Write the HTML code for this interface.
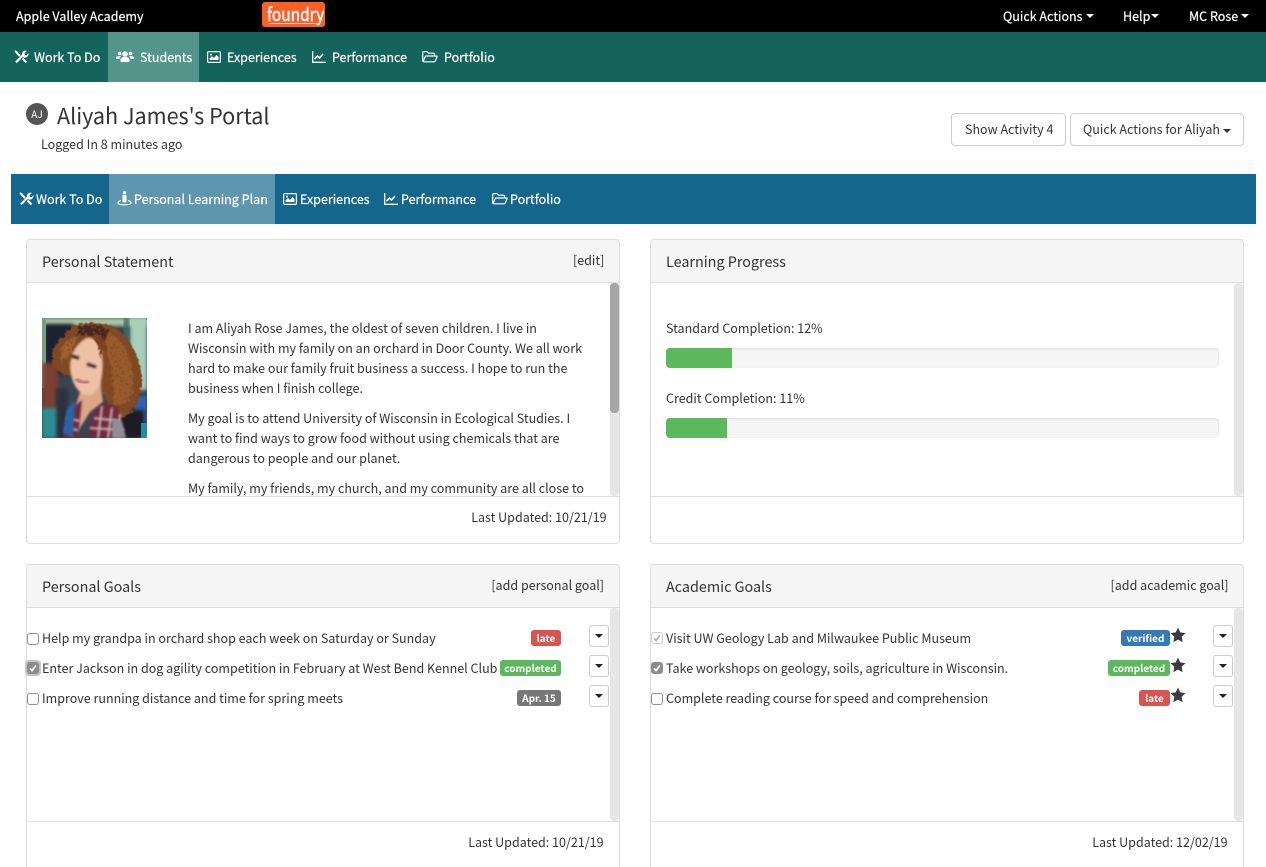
<!DOCTYPE html>
<html><head><meta charset="utf-8"><style>
html,body{margin:0;padding:0;background:#fff}
#p{position:relative;width:1266px;height:867px;overflow:hidden;background:#fff;font-family:"Noto Sans CJK JP","Liberation Sans",sans-serif;font-size:13px;color:#333}
.a,.t{position:absolute}
.t{white-space:nowrap;line-height:20px;transform:scaleX(.963);transform-origin:left center}
.r{transform-origin:right center}
.h{font-size:14.5px;transform:scaleX(.99)}
.w{color:#fff;-webkit-text-stroke:.2px #fff}
.card{position:absolute;border:1px solid #ddd;border-radius:4px;background:#fff;box-sizing:border-box}
.hd{position:absolute;left:0;right:0;top:0;height:42px;background:#f5f5f5;border-bottom:1px solid #ddd;border-radius:3px 3px 0 0}
.sb{position:absolute;width:9px;background:#e6e6e6;border-radius:4px}
.cb{position:absolute;width:10px;height:10px;border:1px solid #8f8f8f;border-radius:3px;background:#fff}
.cb.on{background:#8b8b93;border-color:#8b8b93}
.cb svg{position:absolute;left:0;top:0}
.lb{position:absolute;height:16px;line-height:15px;border-radius:3px;color:#fff;font-size:10px;font-weight:700;text-align:center}
.dd{position:absolute;width:18px;height:20px;border:1px solid #ccc;border-radius:3px;background:#fff}
.dd:after{content:"";position:absolute;left:5px;top:8px;border:4px solid transparent;border-top-color:#222;border-bottom:0}
.car{position:absolute;border:4.5px solid transparent;border-top-color:#fff;border-bottom:0}
.btn{position:absolute;height:33px;border:1px solid #ccc;border-radius:4px;background:#fff;box-sizing:border-box}
.bar{position:absolute;height:20px;background:#f5f5f5;border-radius:4px;box-shadow:inset 0 1px 2px rgba(0,0,0,.1)}
.fill{position:absolute;left:0;top:0;height:20px;background:#5cb85c;border-radius:4px 0 0 4px}
svg{display:block}
</style></head><body><div id="p">

<div class="a" style="left:0;top:0;width:1266px;height:32px;background:#000"></div>
<div class="t w" style="left:16px;top:6px">Apple Valley Academy</div>
<div class="a" style="left:262px;top:2px;width:63px;height:25px;background:#ff5f26;border-radius:3px"></div>
<div class="t w" style="left:267px;top:2px;font-size:18px;line-height:24px;transform:scaleX(.86);-webkit-text-stroke:.5px #fff">foundry</div>
<div class="a" style="left:269px;top:23px;width:50px;height:1px;background:#ffe0d2"></div>
<div class="t w" style="left:1003px;top:6px">Quick Actions</div><div class="car" style="left:1086px;top:14px"></div>
<div class="t w" style="left:1123px;top:6px">Help</div><div class="car" style="left:1151px;top:14px"></div>
<div class="t w" style="left:1189px;top:6px">MC Rose</div><div class="car" style="left:1241px;top:14px"></div>

<div class="a" style="left:0;top:32px;width:1266px;height:50px;background:#14645c"></div>
<div class="a" style="left:108px;top:32px;width:91px;height:50px;background:#53958b"></div>
<svg class="a" style="left:14px;top:50px" width="15" height="14" viewBox="0 0 15 14"><path d="M2 2L6 6M8.500 8.500L12.500 12.500" stroke="#fff" stroke-width="2" fill="none"/><path d="M.3 1.300L1.500.2 4 2 2.500 3.500z" fill="#fff"/><path d="M2 12.300L8.800 5.500" stroke="#fff" stroke-width="2.200" fill="none"/><path d="M8 5.800Q7.300 1.300 11.200.5L12.800 1 10.500 3.200 11 4.700 12.500 5.200 14.600 3Q15 6.800 11 7.700Q10 7.800 9.300 7.300z" fill="#fff"/></svg>
<div class="t w" style="left:34px;top:47px">Work To Do</div>
<svg class="a" style="left:116px;top:50px" width="18" height="13" viewBox="0 0 18 13"><circle cx="9" cy="4" r="2.800" fill="#fff"/><circle cx="3.500" cy="3.500" r="1.800" fill="#fff"/><circle cx="14.500" cy="3.500" r="1.800" fill="#fff"/><path d="M4.500 12V9.500Q5 7 9 7t4.500 2.500V12zM0 9V7.500Q1 6 3.500 6L5 6.500Q3.500 7.500 3.300 9zM18 9V7.500Q17 6 14.500 6L13 6.500q1.500 1 1.700 2.500z" fill="#fff"/></svg>
<div class="t w" style="left:140px;top:47px">Students</div>
<svg class="a" style="left:207px;top:51px" width="14" height="12" viewBox="0 0 14 12"><rect x=".6" y=".6" width="12.800" height="10.800" rx="1" fill="none" stroke="#fff" stroke-width="1.200"/><path d="M2.500 9V7.500L5 5l2 2 2.500-3L11.500 6v3z" fill="#fff"/><circle cx="4" cy="3.600" r="1" fill="#fff"/></svg>
<div class="t w" style="left:227px;top:47px">Experiences</div>
<svg class="a" style="left:312px;top:51px" width="14" height="12" viewBox="0 0 14 12"><path d="M.7 0v11.300H14" fill="none" stroke="#fff" stroke-width="1.300"/><path d="M2.500 8l3-3 2 2 3.500-4" fill="none" stroke="#fff" stroke-width="1.600"/></svg>
<div class="t w" style="left:332px;top:47px">Performance</div>
<svg class="a" style="left:422px;top:51px" width="16" height="12" viewBox="0 0 16 12"><path d="M.7 10.500V1.500Q.7.700 1.500.700h3.500l1.500 1.500h5q1 0 1 1V5M.9 11l2.400-5.500q.2-.5.800-.5h10.400q.9 0 .6.800l-2 4.500q-.2.500-.8.500H1z" fill="none" stroke="#fff" stroke-width="1.200"/></svg>
<div class="t w" style="left:444px;top:47px">Portfolio</div>

<div class="a" style="left:26px;top:103px;width:22px;height:22px;border-radius:50%;background:#555;color:#fff;font-size:10px;line-height:22px;text-align:center">AJ</div>
<div class="t" style="left:57px;top:100px;font-size:22px;line-height:30px;transform:scaleX(.98)">Aliyah James's Portal</div>
<div class="t" style="left:41px;top:134px">Logged In 8 minutes ago</div>
<div class="btn" style="left:951px;top:113px;width:115px"></div>
<div class="t" style="left:965px;top:119px">Show Activity 4</div>
<div class="btn" style="left:1070px;top:113px;width:174px"></div>
<div class="t" style="left:1083px;top:119px">Quick Actions for Aliyah</div>
<div class="a" style="left:1223px;top:129px;border:4px solid transparent;border-top-color:#333;border-bottom:0"></div>

<div class="a" style="left:11px;top:174px;width:1245px;height:50px;background:#14668c"></div>
<div class="a" style="left:109px;top:174px;width:166px;height:50px;background:#5e95af"></div>
<svg class="a" style="left:19px;top:192px" width="15" height="14" viewBox="0 0 15 14"><path d="M2 2L6 6M8.500 8.500L12.500 12.500" stroke="#fff" stroke-width="2" fill="none"/><path d="M.3 1.300L1.500.2 4 2 2.500 3.500z" fill="#fff"/><path d="M2 12.300L8.800 5.500" stroke="#fff" stroke-width="2.200" fill="none"/><path d="M8 5.800Q7.300 1.300 11.200.5L12.800 1 10.500 3.200 11 4.700 12.500 5.200 14.600 3Q15 6.800 11 7.700Q10 7.800 9.300 7.300z" fill="#fff"/></svg>
<div class="t w" style="left:36px;top:189px">Work To Do</div>
<svg class="a" style="left:117px;top:191px" width="15" height="15" viewBox="0 0 15 15"><circle cx="7.500" cy="1.800" r="1.700" fill="#fff"/><rect x="5.500" y="4" width="4" height="7.500" rx="1" fill="#fff"/><path d="M4 9.500Q1 10.300 1 11.700 1 13.800 7.500 13.800T14 11.700Q14 10.300 11 9.500" fill="none" stroke="#fff" stroke-width="1.100"/></svg>
<div class="t w" style="left:134px;top:189px">Personal Learning Plan</div>
<svg class="a" style="left:283px;top:193px" width="14" height="12" viewBox="0 0 14 12"><rect x=".6" y=".6" width="12.800" height="10.800" rx="1" fill="none" stroke="#fff" stroke-width="1.200"/><path d="M2.500 9V7.500L5 5l2 2 2.500-3L11.500 6v3z" fill="#fff"/><circle cx="4" cy="3.600" r="1" fill="#fff"/></svg>
<div class="t w" style="left:300px;top:189px">Experiences</div>
<svg class="a" style="left:384px;top:193px" width="14" height="12" viewBox="0 0 14 12"><path d="M.7 0v11.300H14" fill="none" stroke="#fff" stroke-width="1.300"/><path d="M2.500 8l3-3 2 2 3.500-4" fill="none" stroke="#fff" stroke-width="1.600"/></svg>
<div class="t w" style="left:401px;top:189px">Performance</div>
<svg class="a" style="left:492px;top:193px" width="16" height="12" viewBox="0 0 16 12"><path d="M.7 10.500V1.500Q.7.700 1.500.700h3.500l1.500 1.500h5q1 0 1 1V5M.9 11l2.400-5.500q.2-.5.800-.5h10.400q.9 0 .6.800l-2 4.500q-.2.500-.8.500H1z" fill="none" stroke="#fff" stroke-width="1.200"/></svg>
<div class="t w" style="left:510px;top:189px">Portfolio</div>

<!-- Personal Statement -->
<div class="card" style="left:26px;top:239px;width:594px;height:305px"><div class="hd"></div></div>
<div class="t h" style="left:42px;top:252px">Personal Statement</div>
<div class="t" style="left:573px;top:250px">[edit]</div>
<div class="a" style="left:27px;top:496px;width:592px;height:1px;background:#ddd"></div>
<div class="sb" style="left:610px;top:283px;height:213px"></div>
<div class="sb" style="left:610px;top:283px;height:130px;background:#a6a6a6"></div>
<svg class="a" style="left:42px;top:318px" width="105" height="120" viewBox="0 0 105 120"><defs><filter id="bl" x="-20%" y="-20%" width="140%" height="140%"><feGaussianBlur stdDeviation="1.800"/></filter><filter id="bl2" x="-20%" y="-20%" width="140%" height="140%"><feGaussianBlur stdDeviation="1.100"/></filter><filter id="curl" x="-10%" y="-10%" width="120%" height="120%"><feTurbulence type="fractalNoise" baseFrequency=".3" numOctaves="2" seed="4" result="n"/><feDisplacementMap in="SourceGraphic" in2="n" scale="7"/><feGaussianBlur stdDeviation=".6"/></filter><filter id="tex" x="0" y="0" width="100%" height="100%"><feTurbulence type="fractalNoise" baseFrequency=".35" numOctaves="2" seed="9"/><feColorMatrix values="0 0 0 0 .2  0 0 0 0 .08  0 0 0 0 .03  0 0 0 3 -1.450"/><feComposite in2="SourceAlpha" operator="in"/></filter><clipPath id="cp"><rect width="105" height="120"/></clipPath></defs><g clip-path="url(#cp)">
<rect width="105" height="120" fill="#3a4450"/>
<rect width="105" height="8" fill="#a8c8a4" filter="url(#bl)"/>
<rect x="3" y="6" width="28" height="50" fill="#1e2433" filter="url(#bl)"/>
<rect x="0" y="0" width="4" height="70" fill="#7d9c84"/>
<rect x="88" y="0" width="17" height="72" fill="#a7d0bb" filter="url(#bl)"/>
<rect x="82" y="0" width="5" height="40" fill="#3f6a66" filter="url(#bl)"/>
<rect x="0" y="45" width="16" height="50" fill="#7a3f30" filter="url(#bl)"/>
<rect x="14" y="70" width="12" height="50" fill="#2b333f" filter="url(#bl)"/>
<rect x="0" y="90" width="14" height="30" fill="#2a8d94" filter="url(#bl)"/>
<rect x="92" y="78" width="13" height="28" fill="#2f62b8" filter="url(#bl)"/>
<rect x="78" y="92" width="24" height="28" fill="#1f1d22" filter="url(#bl)"/>
<rect x="99" y="105" width="6" height="15" fill="#1f8f9c"/>
<path d="M10 45Q9 27 22 18Q30 4 52 5Q76 5 88 25Q101 45 100 70Q96 92 82 99Q72 100 66 88L60 72 30 58Q14 56 10 45z" fill="#804722" filter="url(#curl)"/>
<path d="M45 12Q68 8 82 28Q94 48 90 78Q80 92 72 86Q72 50 62 28z" fill="#9a5a2c" filter="url(#curl)"/>
<path d="M20 28Q26 20 36 18L30 34 18 46z" fill="#a2622f" filter="url(#curl)"/>
<path d="M36 9Q52 3 68 12L62 24Q48 14 34 18z" fill="#47261a" filter="url(#curl)"/>
<path d="M10 45Q9 27 22 18Q30 4 52 5Q76 5 88 25Q101 45 100 70Q96 92 82 99Q72 100 66 88L60 72 30 58Q14 56 10 45z" filter="url(#tex)"/>
<path d="M38 74L58 62 61 84 48 94 34 116 33 90z" fill="#dca688" filter="url(#bl2)"/>
<path d="M28 50Q28 30 44 20Q58 18 60 36Q62 54 58 66Q52 80 42 77Q30 70 28 50z" fill="#eec0a5" filter="url(#bl2)"/>
<path d="M50 20Q58 26 57 40L65 30Q62 20 54 15z" fill="#7a4321" filter="url(#curl)"/>
<path d="M29 38l8 2M45 46l9 3" stroke="#3b2826" stroke-width="3" fill="none" filter="url(#bl2)"/>
<path d="M34 61Q40 66 47 64" stroke="#bd6478" stroke-width="3" fill="none" filter="url(#bl2)"/>
<path d="M21 120L25 94 40 82 36 120zM50 96L62 84 76 90 84 120H46z" fill="#702c3e" filter="url(#bl2)"/>
<path d="M24 100l14 3M23 110l13 2M52 100l26 3M48 110l34 2M60 88l-4 32M70 90l-4 30M78 96l-2 24" stroke="#cfb9bc" stroke-width="2" fill="none" filter="url(#bl2)"/>
<path d="M70 120V100l10 4 4 16z" fill="#8f8d9b" filter="url(#bl2)"/>
<path d="M21 115l4-24 8-9-2 38z" fill="#2b62a8" filter="url(#bl2)"/>
</g></svg>
<div class="t" style="left:188px;top:318px">I am Aliyah Rose James, the oldest of seven children. I live in</div>
<div class="t" style="left:188px;top:338px">Wisconsin with my family on an orchard in Door County. We all work</div>
<div class="t" style="left:188px;top:358px">hard to make our family fruit business a success. I hope to run the</div>
<div class="t" style="left:188px;top:378px">business when I finish college.</div>
<div class="t" style="left:188px;top:408px">My goal is to attend University of Wisconsin in Ecological Studies. I</div>
<div class="t" style="left:188px;top:428px">want to find ways to grow food without using chemicals that are</div>
<div class="t" style="left:188px;top:448px">dangerous to people and our planet.</div>
<div class="t" style="left:188px;top:478px">My family, my friends, my church, and my community are all close to</div>
<div class="t r" style="right:659px;top:507px">Last Updated: 10/21/19</div>

<!-- Learning Progress -->
<div class="card" style="left:650px;top:239px;width:594px;height:305px"><div class="hd"></div></div>
<div class="t h" style="left:666px;top:252px">Learning Progress</div>
<div class="a" style="left:651px;top:496px;width:592px;height:1px;background:#ddd"></div>
<div class="sb" style="left:1234px;top:283px;height:213px"></div>
<div class="t" style="left:666px;top:318px">Standard Completion: 12%</div>
<div class="bar" style="left:666px;top:348px;width:553px"><div class="fill" style="width:66px"></div></div>
<div class="t" style="left:666px;top:388px">Credit Completion: 11%</div>
<div class="bar" style="left:666px;top:418px;width:553px"><div class="fill" style="width:61px"></div></div>

<!-- Personal Goals -->
<div class="card" style="left:26px;top:564px;width:594px;height:320px"><div class="hd"></div></div>
<div class="t h" style="left:42px;top:577px">Personal Goals</div>
<div class="t r" style="right:662px;top:575px">[add personal goal]</div>
<div class="a" style="left:27px;top:821px;width:592px;height:1px;background:#ddd"></div>
<div class="sb" style="left:610px;top:608px;height:213px"></div>
<div class="cb" style="left:27px;top:633px"></div>
<div class="a" style="left:25px;top:660px;width:16px;height:16px;border-radius:4px;background:#c4c4c4"></div>
<div class="cb on" style="left:27px;top:662px"><svg width="10" height="10" viewBox="0 0 10 10"><path d="M2 5.500l2 2 4-5" fill="none" stroke="#fff" stroke-width="1.800"/></svg></div>
<div class="cb" style="left:27px;top:693px"></div>
<div class="t" style="left:42px;top:628px">Help my grandpa in orchard shop each week on Saturday or Sunday</div>
<div class="t" style="left:42px;top:658px">Enter Jackson in dog agility competition in February at West Bend Kennel Club</div>
<div class="t" style="left:42px;top:688px">Improve running distance and time for spring meets</div>
<div class="lb" style="left:531px;top:630px;width:30px;background:#d9534f">late</div>
<div class="lb" style="left:500px;top:660px;width:61px;background:#5cb85c">completed</div>
<div class="lb" style="left:517px;top:690px;width:44px;background:#777">Apr. 15</div>
<div class="dd" style="left:589px;top:625px"></div>
<div class="dd" style="left:589px;top:655px"></div>
<div class="dd" style="left:589px;top:685px"></div>
<div class="t r" style="right:662px;top:832px">Last Updated: 10/21/19</div>

<!-- Academic Goals -->
<div class="card" style="left:650px;top:564px;width:594px;height:320px"><div class="hd"></div></div>
<div class="t h" style="left:666px;top:577px">Academic Goals</div>
<div class="t r" style="right:38px;top:575px">[add academic goal]</div>
<div class="a" style="left:651px;top:821px;width:592px;height:1px;background:#ddd"></div>
<div class="sb" style="left:1234px;top:608px;height:213px"></div>
<div class="cb" style="left:651px;top:632px;border-color:#ccc"><svg width="10" height="10" viewBox="0 0 10 10"><path d="M2 5.500l2 2 4-5" fill="none" stroke="#aaa" stroke-width="1.600"/></svg></div>
<div class="cb on" style="left:651px;top:662px"><svg width="10" height="10" viewBox="0 0 10 10"><path d="M2 5.500l2 2 4-5" fill="none" stroke="#fff" stroke-width="1.800"/></svg></div>
<div class="cb" style="left:651px;top:693px"></div>
<div class="t" style="left:666px;top:628px">Visit UW Geology Lab and Milwaukee Public Museum</div>
<div class="t" style="left:666px;top:658px">Take workshops on geology, soils, agriculture in Wisconsin.</div>
<div class="t" style="left:666px;top:688px">Complete reading course for speed and comprehension</div>
<div class="lb" style="left:1121px;top:630px;width:49px;background:#337ab7">verified</div>
<div class="lb" style="left:1108px;top:660px;width:62px;background:#5cb85c">completed</div>
<div class="lb" style="left:1139px;top:690px;width:31px;background:#d9534f">late</div>
<svg class="a" style="left:1170px;top:627px" width="16" height="16" viewBox="0 0 16 16"><path d="M8 .5l2.300 4.900 5.200.7-3.800 3.700.9 5.300L8 12.600l-4.600 2.500.9-5.300L.5 6.100l5.200-.7z" fill="#3c3c3c"/></svg>
<svg class="a" style="left:1170px;top:657px" width="16" height="16" viewBox="0 0 16 16"><path d="M8 .5l2.300 4.900 5.200.7-3.800 3.700.9 5.300L8 12.600l-4.600 2.500.9-5.300L.5 6.100l5.200-.7z" fill="#3c3c3c"/></svg>
<svg class="a" style="left:1170px;top:687px" width="16" height="16" viewBox="0 0 16 16"><path d="M8 .5l2.300 4.900 5.200.7-3.800 3.700.9 5.300L8 12.600l-4.600 2.500.9-5.300L.5 6.100l5.200-.7z" fill="#3c3c3c"/></svg>
<div class="dd" style="left:1213px;top:625px"></div>
<div class="dd" style="left:1213px;top:655px"></div>
<div class="dd" style="left:1213px;top:685px"></div>
<div class="t r" style="right:38px;top:832px">Last Updated: 12/02/19</div>

</div></body></html>
